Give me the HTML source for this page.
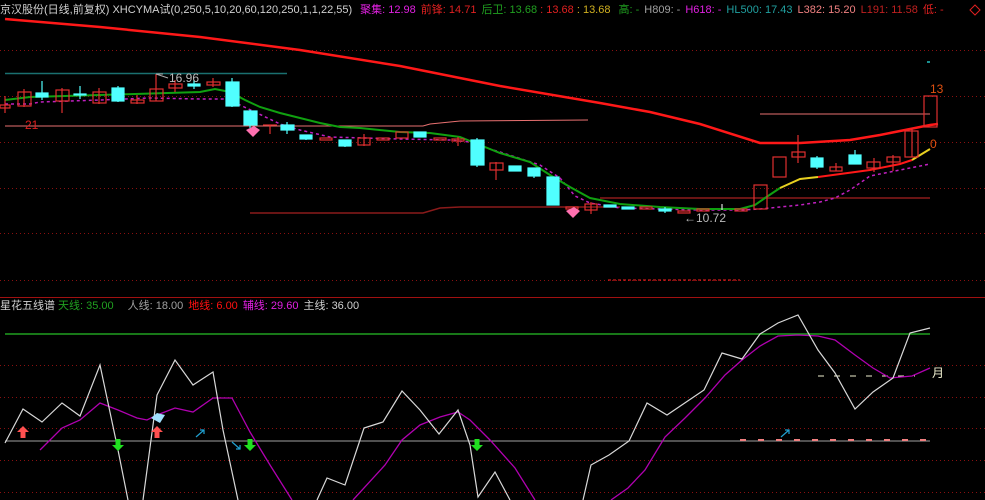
<!DOCTYPE html>
<html><head><meta charset="utf-8"><style>
html,body{margin:0;padding:0;background:#000;width:985px;height:500px;overflow:hidden}
svg{display:block}
text{font-family:"Liberation Sans","Noto Sans CJK SC",sans-serif;font-size:12px}
text.h{font-size:11px}
</style></head><body>
<svg width="985" height="500" viewBox="0 0 985 500" xmlns="http://www.w3.org/2000/svg">
<rect width="985" height="500" fill="#000"/>
<g stroke="#8a1010" stroke-width="1" stroke-dasharray="1,3">
<line x1="0" y1="50.5" x2="985" y2="50.5"/><line x1="0" y1="96.5" x2="985" y2="96.5"/>
<line x1="0" y1="142.5" x2="985" y2="142.5"/><line x1="0" y1="188.5" x2="985" y2="188.5"/>
<line x1="0" y1="233.5" x2="985" y2="233.5"/><line x1="0" y1="280.5" x2="985" y2="280.5"/>
<line x1="0" y1="365.5" x2="985" y2="365.5"/><line x1="0" y1="397.5" x2="985" y2="397.5"/>
<line x1="0" y1="428.5" x2="985" y2="428.5"/><line x1="0" y1="460.5" x2="985" y2="460.5"/>
<line x1="0" y1="492.5" x2="985" y2="492.5"/>
</g>
<line x1="0" y1="297.5" x2="985" y2="297.5" stroke="#a01010"/>
<line x1="5" y1="73.5" x2="287" y2="73.5" stroke="#1a7070" stroke-width="1.5"/>
<polyline fill="none" stroke="#e87070" points="5,126 423,126 430,124 440,123 460,121 588,120"/>
<polyline fill="none" stroke="#8a1a1a" stroke-width="1.5" points="250,213 423,213 440,208 460,207 620,207"/>
<line x1="600" y1="198" x2="930" y2="198" stroke="#8a1a1a" stroke-width="1.5"/>
<line x1="760" y1="114" x2="930" y2="114" stroke="#e87070"/>
<line x1="608" y1="280" x2="740" y2="280" stroke="#ff2020" stroke-dasharray="3,2"/>
<polyline fill="none" stroke="#ff1818" stroke-width="2.5" points="5,19 100,27 200,37 300,50 400,66 500,86 600,103 650,112 700,124 760,143 800,143 850,140 880,135 900,131 930,125 938,124"/>
<polyline fill="none" stroke="#c020c0" stroke-width="1.5" stroke-dasharray="3,3" points="5,104 30,104 40,102 100,100 150,98 200,99 225,99 240,105 255,112 280,124 300,130 330,137 400,139 450,140 470,142 480,146 500,152 540,165 560,178 575,196 590,203 620,208 660,209 700,210 740,210 760,209 800,205 820,202 835,198 850,190 870,176 900,170 930,164"/>
<polyline fill="none" stroke="#10a010" stroke-width="2" points="5,100 30,97 100,95 200,92 215,89 230,92 245,100 260,107 280,113 300,118 320,123 340,127 360,128 400,132 430,133 460,137 480,145 500,153 530,162 550,175 570,187 590,198 620,204 660,207 700,209 740,209 755,205 765,198 780,188"/>
<polyline fill="none" stroke="#e8d020" stroke-width="2" points="780,188 800,179 818,177"/>
<polyline fill="none" stroke="#ff1818" stroke-width="2" points="818,177 870,170 900,164 912,160"/>
<polyline fill="none" stroke="#e8d020" stroke-width="2" points="912,160 930,149"/>
<g stroke-width="1.2">
<g stroke="#e03030" fill="none">
<line x1="5" y1="96" x2="5" y2="113"/><rect x="0" y="105" width="10" height="3"/>
<line x1="24" y1="89" x2="24" y2="107"/><rect x="18" y="92" width="13" height="14"/>
<line x1="62" y1="88" x2="62" y2="113"/><rect x="56" y="90" width="13" height="11"/>
<line x1="99" y1="88" x2="99" y2="104"/><rect x="93" y="92" width="13" height="11"/>
<line x1="137" y1="95" x2="137" y2="104"/><rect x="131" y="100" width="13" height="3"/>
<line x1="156" y1="74" x2="156" y2="101"/><rect x="150" y="89" width="13" height="12"/>
<line x1="175" y1="80" x2="175" y2="92"/><rect x="169" y="84" width="13" height="4"/>
<line x1="213" y1="78" x2="213" y2="87"/><rect x="207" y="82" width="13" height="3"/>
<line x1="270" y1="125" x2="270" y2="134"/><line x1="263" y1="125" x2="277" y2="125"/>
<rect x="320" y="138" width="12" height="2"/>
<line x1="364" y1="134" x2="364" y2="146"/><rect x="358" y="138" width="12" height="7"/>
<rect x="377" y="138" width="12" height="2"/>
<rect x="396" y="132" width="12" height="6"/>
<rect x="434" y="138" width="12" height="2"/>
<line x1="458" y1="137" x2="458" y2="146"/><rect x="452" y="139" width="12" height="2"/>
<line x1="496" y1="162" x2="496" y2="180"/><rect x="490" y="163" width="13" height="7"/>
<rect x="566" y="207" width="12" height="2"/>
<line x1="591" y1="202" x2="591" y2="214"/><rect x="585" y="204" width="12" height="6"/>
<rect x="640" y="207" width="12" height="2"/>
<rect x="678" y="211" width="12" height="2"/>
<rect x="697" y="209" width="12" height="2"/>
<rect x="735" y="209" width="12" height="2"/>
<rect x="754" y="185" width="13" height="24"/>
<rect x="773" y="157" width="13" height="20"/>
<line x1="798" y1="135" x2="798" y2="163"/><rect x="792" y="152" width="13" height="5"/>
<line x1="836" y1="163" x2="836" y2="171"/><rect x="830" y="167" width="12" height="4"/>
<line x1="874" y1="158" x2="874" y2="172"/><rect x="867" y="162" width="13" height="6"/>
<line x1="893" y1="155" x2="893" y2="171"/><rect x="887" y="157" width="13" height="5"/>
<line x1="912" y1="128" x2="912" y2="157"/><rect x="905" y="131" width="13" height="26"/>
<rect x="924" y="96" width="13" height="31"/>
</g>
<g stroke="#50ffff" fill="#50ffff">
<line x1="42" y1="81" x2="42" y2="100"/><rect x="36" y="93" width="12" height="4"/>
<line x1="80" y1="86" x2="80" y2="99"/><rect x="74" y="94" width="12" height="1"/>
<line x1="118" y1="86" x2="118" y2="102"/><rect x="112" y="88" width="12" height="13"/>
<line x1="194" y1="80" x2="194" y2="89"/><rect x="188" y="84" width="12" height="2"/>
<line x1="232" y1="78" x2="232" y2="107"/><rect x="226" y="82" width="13" height="24"/>
<line x1="250" y1="110" x2="250" y2="128"/><rect x="244" y="111" width="13" height="14"/>
<line x1="287" y1="122" x2="287" y2="134"/><rect x="281" y="125" width="13" height="5"/>
<line x1="306" y1="135" x2="306" y2="140"/><rect x="300" y="135" width="12" height="4"/>
<line x1="345" y1="140" x2="345" y2="147"/><rect x="339" y="140" width="12" height="6"/>
<rect x="414" y="132" width="12" height="5"/>
<line x1="477" y1="138" x2="477" y2="167"/><rect x="471" y="140" width="13" height="25"/>
<rect x="509" y="166" width="12" height="5"/>
<line x1="534" y1="168" x2="534" y2="178"/><rect x="528" y="168" width="12" height="8"/>
<rect x="547" y="177" width="12" height="28"/>
<rect x="604" y="205" width="12" height="2"/>
<rect x="622" y="207" width="12" height="2"/>
<line x1="665" y1="207" x2="665" y2="213"/><rect x="659" y="209" width="12" height="2"/>
<line x1="817" y1="156" x2="817" y2="169"/><rect x="811" y="158" width="12" height="9"/>
<line x1="855" y1="150" x2="855" y2="164"/><rect x="849" y="155" width="12" height="9"/>
</g>
<line x1="722" y1="204" x2="722" y2="210" stroke="#ddd"/>
</g>
<text x="25" y="129" fill="#e02020">21</text>
<path d="M156 74 L163 74 M156 74 L168 78" stroke="#aaa" fill="none"/>
<text x="169" y="82" fill="#bbb">16.96</text>
<text x="684" y="222" fill="#bbb">←10.72</text>
<text x="930" y="93" fill="#e05010">13</text>
<text x="930" y="148" fill="#e05010">0</text>
<rect x="927" y="61" width="3" height="2" fill="#1a9090"/>
<path d="M246 130 L254 126 L260 130 L253 137 Z" fill="#ff70b0"/>
<path d="M566 211 L574 207 L580 211 L573 218 Z" fill="#ff70b0"/>
<text class="h" x="0" y="13"><tspan fill="#d0d0d0">京汉股份(日线,前复权) XHCYMA试(0,250,5,10,20,60,120,250,1,1,22,55)</tspan><tspan fill="#e020e0" dx="8">聚集: 12.98</tspan><tspan fill="#e02020" dx="5">前锋: 14.71</tspan><tspan fill="#20a020" dx="5">后卫: 13.68</tspan><tspan fill="#e02020"> : 13.68</tspan><tspan fill="#d0b020"> : 13.68</tspan><tspan fill="#20a020" dx="8">高: -</tspan><tspan fill="#a0a0a0" dx="5">H809: -</tspan><tspan fill="#e020e0" dx="5">H618: -</tspan><tspan fill="#20a0a0" dx="5">HL500: 17.43</tspan><tspan fill="#f08080" dx="5">L382: 15.20</tspan><tspan fill="#c02020" dx="5">L191: 11.58</tspan><tspan fill="#e02020" dx="5">低: -</tspan></text>
<path d="M975 5 L980 10 L975 15 L970 10 Z" fill="none" stroke="#e02020"/>
<text class="h" x="0" y="309"><tspan fill="#d0d0d0">星花五线谱</tspan><tspan fill="#20a020" dx="3">天线: 35.00</tspan><tspan fill="#a0a0a0" dx="14">人线: 18.00</tspan><tspan fill="#ff1010" dx="5">地线: 6.00</tspan><tspan fill="#e020e0" dx="5">辅线: 29.60</tspan><tspan fill="#d0d0d0" dx="5">主线: 36.00</tspan></text>
<line x1="5" y1="334" x2="930" y2="334" stroke="#20a020" stroke-width="1.5"/>
<line x1="5" y1="441" x2="930" y2="441" stroke="#a0a0a0"/>
<line x1="740" y1="440" x2="930" y2="440" stroke="#f08080" stroke-width="2" stroke-dasharray="6,12"/>
<line x1="818" y1="376" x2="915" y2="376" stroke="#f0f0d0" stroke-dasharray="6,10"/>
<text x="932" y="377" fill="#f0f0d0">月</text>
<polyline fill="none" stroke="#b000b0" stroke-width="1.3" points="40,450 62,428 80,420 100,403 118,410 137,418 147,420 157,415 175,408 193,412 213,398 232,398 250,432 270,465 292,500"/>
<polyline fill="none" stroke="#b000b0" stroke-width="1.3" points="353,500 385,465 402,440 420,425 440,417 458,412 470,420 490,440 515,468 535,500"/>
<polyline fill="none" stroke="#b000b0" stroke-width="1.3" points="611,500 628,488 645,470 665,437 685,418 705,398 725,375 742,360 760,346 778,336 798,335 818,336 835,340 855,355 873,368 890,378 912,376 930,368"/>
<polyline fill="none" stroke="#d8d8d8" stroke-width="1.2" points="5,443 23,409 42,422 62,403 80,416 100,365 118,450 128,500"/>
<polyline fill="none" stroke="#d8d8d8" stroke-width="1.2" points="143,500 157,395 175,360 193,385 213,372 223,430 238,500"/>
<polyline fill="none" stroke="#d8d8d8" stroke-width="1.2" points="317,500 327,478 345,485 364,428 383,422 402,391 420,410 439,434 458,410 470,445 478,497 495,472 510,500"/>
<polyline fill="none" stroke="#d8d8d8" stroke-width="1.2" points="583,500 591,465 609,455 629,441 647,403 667,415 704,390 722,353 742,359 760,334 778,323 798,315 818,350 835,373 855,409 873,392 893,378 910,333 930,328"/>
<g fill="#ff5050"><path d="M23,426 L29,432 L25.5,432 L25.5,438 L20.5,438 L20.5,432 L17,432 Z"/><path d="M157,426 L163,432 L159.5,432 L159.5,438 L154.5,438 L154.5,432 L151,432 Z"/></g>
<g fill="#20e020"><path d="M118,451 L124,445 L120.5,445 L120.5,439 L115.5,439 L115.5,445 L112,445 Z"/><path d="M250,451 L256,445 L252.5,445 L252.5,439 L247.5,439 L247.5,445 L244,445 Z"/><path d="M477,451 L483,445 L479.5,445 L479.5,439 L474.5,439 L474.5,445 L471,445 Z"/></g>
<path d="M151 418 L157 413 L165 415 L160 423 Z" fill="#a0e0ff"/>
<g stroke="#20a0d0" fill="none" stroke-width="1.2"><path d="M196 437 L204 430 M200 430 L204 430 L204 434"/><path d="M232 442 L240 449 M236 449 L240 449 L240 445"/><path d="M781 437 L789 430 M785 430 L789 430 L789 434"/></g>
</svg>
</body></html>
